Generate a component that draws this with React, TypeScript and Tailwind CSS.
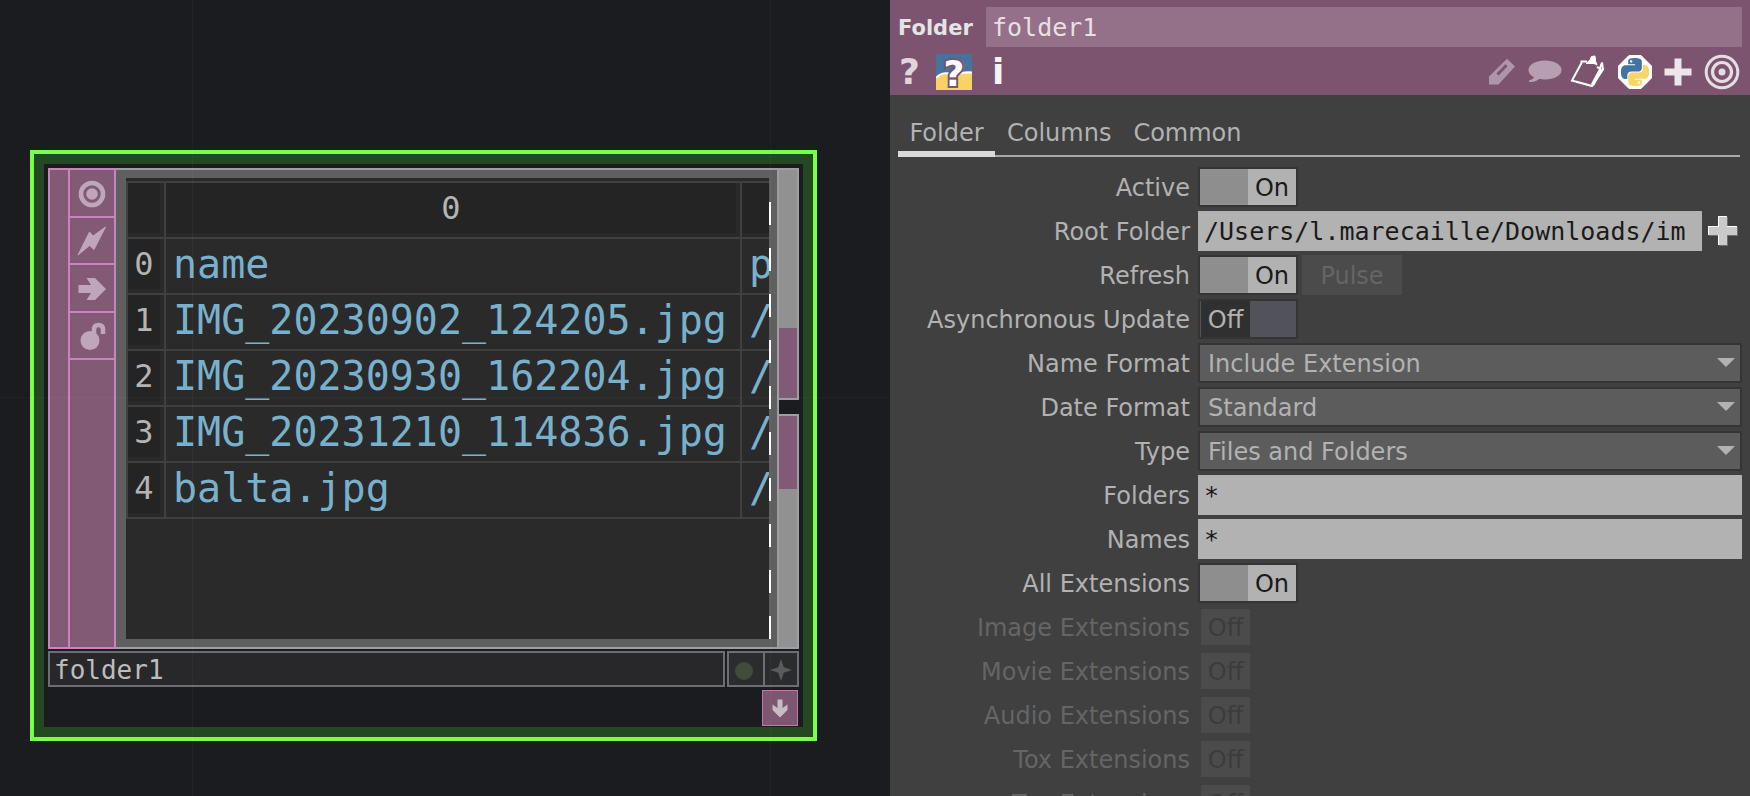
import React, { useState } from "react";

const SANS = "font-['DejaVu_Sans','Noto_Sans',sans-serif]";
const MONO = "font-['DejaVu_Sans_Mono','Liberation_Mono',monospace]";

/* ---------- icons ---------- */

function ViewerTarget() {
  return (
    <svg viewBox="0 0 28 28" className="size-7" fill="none" stroke="#bfa6ba">
      <circle cx="14" cy="14" r="11" strokeWidth="4.6" />
      <circle cx="14" cy="14" r="5.8" fill="#bfa6ba" stroke="none" />
    </svg>
  );
}

function Bolt() {
  return (
    <svg viewBox="0 0 30 30" className="size-[30px]" fill="#bfa6ba" stroke="#bfa6ba" strokeLinejoin="round">
      <path d="M1 29 L12.500 6 L16 10 L28.500 1 L17 23.500 L12.500 19.500 Z" />
    </svg>
  );
}

function ArrowRight() {
  return (
    <svg viewBox="0 0 28 24" className="h-6 w-7" fill="#bfa6ba">
      <path d="M0.500 8 H13 L8.500 1 H17 L28 12 L17 23 H8.500 L13 16 H0.500 Z" />
    </svg>
  );
}

function OpenLock() {
  return (
    <svg viewBox="0 0 28 28" className="size-7">
      <circle cx="12" cy="18.500" r="9.500" fill="#bfa6ba" />
      <path d="M16 13 V7.500 Q16 3 20.500 3 Q25 3 25 7.500 V12" fill="none" stroke="#bfa6ba" strokeWidth="4.500" />
    </svg>
  );
}

function Sparkle() {
  return (
    <svg viewBox="0 0 22 22" className="size-[22px]" fill="#5a5c5b">
      <path d="M11 0 L13.800 8.200 L22 11 L13.800 13.800 L11 22 L8.200 13.800 L0 11 L8.200 8.200 Z" />
    </svg>
  );
}

function ArrowDown() {
  return (
    <svg viewBox="0 0 16 19" className="h-[19px] w-4" fill="#c6bcc3">
      <path d="M5.500 0.500 H10.500 V9 L15.500 5.500 V11 L8 18.500 L0.500 11 V5.500 L5.500 9 Z" />
    </svg>
  );
}

function PythonHelp() {
  return (
    <svg viewBox="0 0 36 36" className="size-9">
      <rect width="36" height="36" fill="#f7d366" />
      <path d="M0 0 H36 V18 Q27 18 21 20 Q8 17 0 24 Z" fill="#4672a0" />
      <path d="M0 24 Q5 18 14 19.500 M24 19.500 Q30 18 36 18.500" fill="none" stroke="#fff" strokeWidth="2" />
      <text
        x="18"
        y="32"
        textAnchor="middle"
        fontFamily="DejaVu Sans"
        fontWeight="bold"
        fontSize="36"
        fill="#fff"
        stroke="#7c5470"
        strokeWidth="4"
        paintOrder="stroke"
      >
        ?
      </text>
    </svg>
  );
}

function Pencil() {
  return (
    <svg viewBox="0 0 28 28" className="size-7">
      <path d="M1 18.500 L19 0.800 L27 8.500 L10.500 26.500 H1 Z" fill="#b095aa" />
      <path d="M9.500 16.500 L18.500 7.200" stroke="#7c5470" strokeWidth="3" />
    </svg>
  );
}

function Bubble() {
  return (
    <svg viewBox="0 0 34 24" className="h-6 w-[34px]" fill="#b79fb1">
      <ellipse cx="17" cy="10" rx="16.500" ry="9.500" />
      <path d="M6 15 Q7 19 1 20.500 V22 Q9 22.500 13 17 Z" />
    </svg>
  );
}

function Clipboard() {
  return (
    <svg viewBox="0 0 36 34" className="h-[34px] w-9" fill="none" stroke="#fff">
      <path d="M12 7 L2 25.500 L22 31 L33 14.500 L32 7.500 L30 13" strokeWidth="2" />
      <path d="M31 14 L22.500 30" strokeWidth="3.600" />
      <path d="M10.500 6.500 L17 6.500 M27 12 L31 14" strokeWidth="2" />
      <path d="M16 8.500 L20 5 L21.500 1.500 L25 1 L25.500 6 L27 10 L24 8.500 Z" fill="#fff" strokeWidth="1" />
    </svg>
  );
}

const SNAKE =
  "M14.25.18l.9.2.73.26.59.3.45.32.34.34.25.34.16.33.1.3.04.26.02.2-.01.13V8.5l-.05.63-.13.55-.21.46-.26.38-.3.31-.33.25-.35.19-.35.14-.33.1-.3.07-.26.04-.21.02H8.77l-.69.05-.59.14-.5.22-.41.27-.33.32-.27.35-.2.36-.15.37-.1.35-.07.32-.04.27-.02.21v3.06H3.17l-.21-.03-.28-.07-.32-.12-.35-.18-.36-.26-.36-.36-.35-.46-.32-.59-.28-.73-.21-.88-.14-1.05-.05-1.23.06-1.22.16-1.04.24-.87.32-.71.36-.57.4-.44.42-.33.42-.24.4-.16.36-.1.32-.05.24-.01h.16l.06.01h8.16v-.83H6.18l-.01-2.75-.02-.37.05-.34.11-.31.17-.28.25-.26.31-.23.38-.2.44-.18.51-.15.58-.12.64-.1.71-.06.77-.04.84-.02 1.27.05zm-6.3 1.98l-.23.33-.08.41.08.41.23.34.33.22.41.09.41-.09.33-.22.23-.34.08-.41-.08-.41-.23-.33-.33-.22-.41-.09-.41.09z";

function PythonLogo() {
  return (
    <svg viewBox="0 0 34 34" className="size-[34px]">
      <path d="M11 0.500 H23 L33.500 11 V23 L23 33.500 H11 L0.500 23 V11 Z" fill="#fff" stroke="#fff" strokeLinejoin="round" />
      <g transform="translate(3 3) scale(1.17)">
        <path d={SNAKE} fill="#4373a3" />
        <path d={SNAKE} fill="#f8d567" transform="rotate(180 12 12)" />
      </g>
    </svg>
  );
}

function Plus() {
  return (
    <svg viewBox="0 0 28 28" className="size-7" fill="#ece5ea">
      <path d="M10.500 0.500 H17.500 V10.500 H27.500 V17.500 H17.500 V27.500 H10.500 V17.500 H0.500 V10.500 H10.500 Z" />
    </svg>
  );
}

function Target() {
  return (
    <svg viewBox="0 0 36 36" className="size-9" fill="none" stroke="#e6dde3">
      <circle cx="18" cy="18" r="15.800" strokeWidth="3" />
      <circle cx="18" cy="18" r="9.500" strokeWidth="3.200" />
      <circle cx="18" cy="18" r="3.500" fill="#e6dde3" stroke="none" />
    </svg>
  );
}

function BevelPlus() {
  const cross = "M10 0 H19 V10 H29 V19 H19 V29 H10 V19 H0 V10 H10 Z";
  return (
    <svg viewBox="0 0 30 30" className="size-[30px]">
      <path d={cross} fill="#6e6e6e" transform="translate(1 1)" />
      <path d={cross} fill="#fff" />
      <path d="M11 1 H19 V11 H29 V19 H19 V29 H11 V19 H1 V11 H11 Z" fill="#cacaca" />
    </svg>
  );
}

/* ---------- network node ---------- */

const FILES = ["name", "IMG_20230902_124205.jpg", "IMG_20230930_162204.jpg", "IMG_20231210_114836.jpg", "balta.jpg"];
const EDGE = "border-[#404040]";

function IndexCell({ children }: { children?: React.ReactNode }) {
  return (
    <th scope="row" className={`h-[56px] border-r-2 border-b-2 p-0 pr-1 pb-1 font-normal ${EDGE}`}>
      <div className="flex h-[50px] items-center justify-center bg-[#242424] text-[32px] leading-none text-[#b4b4b4]">
        {children}
      </div>
    </th>
  );
}

function FileTable() {
  return (
    <table className={`w-full table-fixed border-separate border-spacing-0 border-t-2 border-l-2 ${EDGE}`}>
      <colgroup>
        <col className="w-[38px]" />
        <col />
        <col className="w-[27px]" />
      </colgroup>
      <thead>
        <tr>
          <IndexCell />
          <th scope="col" className={`border-r-2 border-b-2 p-0 pr-1 pb-1 font-normal ${EDGE}`}>
            <div className="flex h-[50px] items-center justify-center bg-[#242424] text-[32px] leading-none text-[#b4b4b4]">0</div>
          </th>
          <td className={`border-b-2 p-0 pb-1 ${EDGE}`}>
            <div className="h-[50px] bg-[#242424]" />
          </td>
        </tr>
      </thead>
      <tbody>
        {FILES.map((name, i) => (
          <tr key={name}>
            <IndexCell>{i}</IndexCell>
            <td className={`border-r-2 border-b-2 p-0 pb-1 pl-[7px] text-[40px] leading-[50px] whitespace-nowrap text-[#79b1cd] ${EDGE}`}>
              {name}
            </td>
            <td className={`border-b-2 p-0 pb-1 pl-[7px] text-[40px] leading-[50px] whitespace-nowrap text-[#79b1cd] ${EDGE}`}>
              {i === 0 ? "p" : "/"}
            </td>
          </tr>
        ))}
      </tbody>
    </table>
  );
}

const FLAGS = [
  { label: "Viewer active", icon: <ViewerTarget /> },
  { label: "Clone immune", icon: <Bolt /> },
  { label: "Bypass", icon: <ArrowRight /> },
  { label: "Lock", icon: <OpenLock /> },
];

function OperatorNode() {
  return (
    <section className={`border-4 border-[#7aff4b] bg-[#244821] p-2.5 ${MONO}`}>
      <div className="bg-[#1b1c20] px-1 pt-1 pb-px">
        <div className="flex h-[481px]">
          <div className="flex border-2 border-[#ca84bd] bg-[#825a76]">
            <div className="w-[18px]" />
            <div className="w-[46px] border-l-2 border-[#ca84bd]">
              <div className="flex h-[190px] flex-col">
                {FLAGS.map((f) => (
                  <button
                    key={f.label}
                    type="button"
                    aria-label={f.label}
                    className="flex flex-1 items-center justify-center border-b-2 border-[#ca84bd] pt-0.5"
                  >
                    {f.icon}
                  </button>
                ))}
              </div>
            </div>
          </div>

          <div className="flex min-w-0 flex-1 border-y-2 border-[#9c9ea2] bg-[#5f5f5f] py-2 pr-1.5 pl-2.5">
            <div className="min-w-0 flex-1 overflow-hidden bg-[#2a2a2a] pt-[3px]">
              <FileTable />
            </div>
            <div className="mt-1 w-0.5 bg-[repeating-linear-gradient(to_top,#fff_0_23px,transparent_23px_46px)]" />
          </div>

          <div className="flex w-[22px] flex-col border-l-2 border-[#9c9ea2]">
            <div className="flex h-[232px] flex-col justify-end border-y-2 border-r-2 border-[#9c9ea2] bg-[#919191]">
              <div className="h-[70px] bg-[#825a76]" />
            </div>
            <div className="h-3.5" />
            <div className="flex-1 border-y-2 border-r-2 border-[#9c9ea2] bg-[#919191]">
              <div className="h-[73px] bg-[#825a76]" />
            </div>
          </div>
        </div>

        <div className="mt-0.5 flex gap-0.5">
          <input
            aria-label="Operator name"
            defaultValue="folder1"
            className="h-9 min-w-0 flex-1 border-2 border-[#6c6e73] bg-[#28282a] px-1 pt-0.5 text-[26px] text-[#bdbdbd] outline-none"
          />
          <div className="flex h-9 w-[72px] border-2 border-[#6c6e73] bg-[#2b2c2d]">
            <button type="button" aria-label="Display" className="flex w-9 items-center justify-center border-r-2 border-[#6c6e73] pt-1 pr-1">
              <span className="size-[18px] rounded-full bg-[#414c39]" />
            </button>
            <button type="button" aria-label="Render" className="flex w-8 items-center justify-center pt-0.5">
              <Sparkle />
            </button>
          </div>
        </div>

        <div className="mt-[3px] flex justify-end pr-px">
          <button type="button" aria-label="Dock" className="flex size-9 items-center justify-center border border-[#c077ad] bg-[#7d5671]">
            <ArrowDown />
          </button>
        </div>
      </div>
    </section>
  );
}

/* ---------- parameter dialog ---------- */

function Row({ label, id, dim, children }: { label: string; id: string; dim?: boolean; children: React.ReactNode }) {
  return (
    <div className="flex h-10 shrink-0 items-center gap-2">
      <label htmlFor={id} className={`w-[300px] shrink-0 pt-0.5 text-right whitespace-nowrap ${dim ? "text-[#656565]" : "text-[#b2b2b2]"}`}>
        {label}
      </label>
      <div className="flex h-10 min-w-0 flex-1 items-center gap-1">{children}</div>
    </div>
  );
}

function Toggle({ id, initial, label }: { id: string; initial: boolean; label: string }) {
  const [on, setOn] = useState(initial);
  return (
    <div className="relative flex h-10 w-[100px] border-2 border-[#353535]">
      <input
        id={id}
        type="checkbox"
        aria-label={label}
        checked={on}
        onChange={() => setOn(!on)}
        className="absolute inset-0 appearance-none"
      />
      {on ? (
        <>
          <span className="flex-1 bg-[#8e8e8e]" />
          <span className="flex w-12 items-center justify-center bg-[#b2b2b2] pt-0.5 text-[#1a1a1a]">On</span>
        </>
      ) : (
        <>
          <span className="flex w-[50px] items-center justify-center border-l border-[#52525a] bg-[#303030] pt-0.5 text-[#b2b2b2]">Off</span>
          <span className="flex-1 bg-[#52525a]" />
        </>
      )}
    </div>
  );
}

function DisabledToggle({ id }: { id: string }) {
  return (
    <div className="relative ml-[3px] flex h-9 w-[49px] items-center justify-center bg-[#4b4b4b] pt-0.5 text-[#3c3c3c]">
      <input id={id} type="checkbox" disabled className="absolute inset-0 appearance-none" />
      Off
    </div>
  );
}

function Menu({ id, value }: { id: string; value: string }) {
  return (
    <div className="relative h-10 min-w-0 flex-1">
      <select
        id={id}
        defaultValue={value}
        className="size-full appearance-none border-2 border-[#353535] bg-[#5c5c5c] pt-0.5 pl-2 text-[#b2b2b2] outline-none"
      >
        <option>{value}</option>
      </select>
      <svg viewBox="0 0 18 9" className="pointer-events-none absolute top-[15px] right-[7px] h-[9px] w-[18px]" fill="#b2b2b2">
        <path d="M0 0 H18 L9 9 Z" />
      </svg>
    </div>
  );
}

function Field({ id, value }: { id: string; value: string }) {
  return (
    <input
      id={id}
      defaultValue={value}
      className={`h-10 min-w-0 flex-1 bg-[#b2b2b2] px-1.5 text-[25px] text-[#1a1a1a] outline-none ${MONO}`}
    />
  );
}

const DISABLED = ["Image Extensions", "Movie Extensions", "Audio Extensions", "Tox Extensions", "Toe Extensions"];

function Parameters() {
  return (
    <aside className={`flex h-full min-w-0 flex-col overflow-hidden bg-[#404040] text-[24px] leading-none ${SANS}`}>
      <header className="h-[95px] shrink-0 bg-[#7c5470] pt-[7px] pr-2 pl-2">
        <div className="flex h-10 items-center">
          <label htmlFor="op-name" className="w-[88px] shrink-0 pt-0.5 text-[21px] font-bold text-[#e6e3e5]">
            Folder
          </label>
          <input
            id="op-name"
            defaultValue="folder1"
            className={`h-10 min-w-0 flex-1 bg-[#957089] px-1.5 text-[25px] text-[#e6e0e4] outline-none ${MONO}`}
          />
        </div>
        <div className="flex h-12 items-center justify-between pt-0.5 pr-0.5">
          <div className="flex items-center">
            <button type="button" aria-label="Help" className="w-[23px] text-[36px] leading-none font-bold text-[#e0d4dd]">
              ?
            </button>
            <button type="button" aria-label="Python help" className="ml-[15px]">
              <PythonHelp />
            </button>
            <button type="button" aria-label="Info" className="ml-5 text-[36px] leading-none font-bold text-[#f6f2f5]">
              i
            </button>
          </div>
          <div className="flex items-center gap-3">
            <button type="button" aria-label="Edit"><Pencil /></button>
            <button type="button" aria-label="Comment"><Bubble /></button>
            <button type="button" aria-label="Copy parameters" className="-ml-1"><Clipboard /></button>
            <button type="button" aria-label="Language"><PythonLogo /></button>
            <button type="button" aria-label="Add"><Plus /></button>
            <button type="button" aria-label="View"><Target /></button>
          </div>
        </div>
      </header>

      <nav className="mt-6 mr-2.5 ml-2 flex h-[38px] shrink-0 border-b-2 border-[#a9a9a9] text-[#b2b2b2]">
        <button type="button" className="-mb-0.5 h-[38px] w-[97px] border-b-6 border-[#dadada] pb-1">
          Folder
        </button>
        <button type="button" className="ml-3 pb-2">Columns</button>
        <button type="button" className="ml-[22px] pb-2">Common</button>
      </nav>

      <div className="mt-2.5 flex flex-col gap-1 pr-2">
        <Row label="Active" id="active">
          <Toggle id="active" label="Active" initial />
        </Row>
        <Row label="Root Folder" id="root">
          <Field id="root" value="/Users/l.marecaille/Downloads/im" />
          <button type="button" aria-label="Browse" className="ml-0.5 mr-1">
            <BevelPlus />
          </button>
        </Row>
        <Row label="Refresh" id="refresh">
          <Toggle id="refresh" label="Refresh" initial />
          <button type="button" disabled className="h-10 w-[100px] bg-[#4b4b4b] pt-0.5 text-[#656565]">
            Pulse
          </button>
        </Row>
        <Row label="Asynchronous Update" id="async">
          <Toggle id="async" label="Asynchronous Update" initial={false} />
        </Row>
        <Row label="Name Format" id="name-format">
          <Menu id="name-format" value="Include Extension" />
        </Row>
        <Row label="Date Format" id="date-format">
          <Menu id="date-format" value="Standard" />
        </Row>
        <Row label="Type" id="type">
          <Menu id="type" value="Files and Folders" />
        </Row>
        <Row label="Folders" id="folders">
          <Field id="folders" value="*" />
        </Row>
        <Row label="Names" id="names">
          <Field id="names" value="*" />
        </Row>
        <Row label="All Extensions" id="all-ext">
          <Toggle id="all-ext" label="All Extensions" initial />
        </Row>
        {DISABLED.map((label, i) => (
          <Row key={label} label={label} id={`ext-${i}`} dim>
            <DisabledToggle id={`ext-${i}`} />
          </Row>
        ))}
      </div>
    </aside>
  );
}

export default function App() {
  return (
    <div className="grid h-screen grid-cols-[890fr_860fr] overflow-hidden bg-[#1b1c20]">
      <main className="relative min-w-0 pt-[150px] pr-[73px] pl-[30px]">
        <OperatorNode />
        <div className="pointer-events-none absolute inset-y-0 left-[192px] w-px bg-white/3" />
        <div className="pointer-events-none absolute inset-y-0 left-[770px] w-px bg-white/3" />
        <div className="pointer-events-none absolute inset-x-0 top-[397px] h-px bg-white/3" />
      </main>
      <Parameters />
    </div>
  );
}
